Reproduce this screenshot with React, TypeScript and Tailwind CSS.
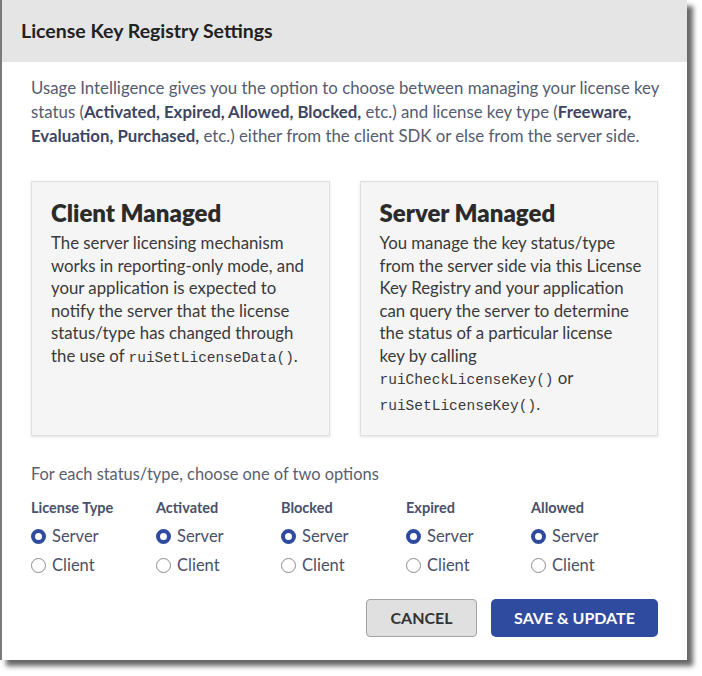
import { useState } from "react";

const COLUMNS = ["License Type", "Activated", "Blocked", "Expired", "Allowed"];

function Radio({ checked, label, onClick }: { checked: boolean; label: string; onClick: () => void }) {
  return (
    <button type="button" onClick={onClick} className="flex items-center gap-[6px] h-[29px] text-[16.5px] text-[#4a5068]">
      {checked ? (
        <span className="w-[15px] h-[15px] rounded-full border-[4px] border-[#2f4b9f] bg-white" />
      ) : (
        <span className="w-[15px] h-[15px] rounded-full border border-[#8a8a8a] bg-white" />
      )}
      {label}
    </button>
  );
}

const mono = { fontFamily: "'Liberation Mono', 'Courier New', monospace" };

export default function App() {
  const [choice, setChoice] = useState<Record<string, string>>({
    "License Type": "Server",
    Activated: "Server",
    Blocked: "Server",
    Expired: "Server",
    Allowed: "Server",
  });

  return (
    <div className="w-[702px] h-[676px] bg-white" style={{ fontFamily: "Lato, 'Noto Sans', sans-serif" }}>
      <div className="w-[687px] h-[660px] bg-white border-l-2 border-[#7a7a7a] shadow-[6px_6px_5px_rgba(0,0,0,0.6)] flex flex-col">
        {/* Header */}
        <div className="h-[62px] bg-[#e5e5e5] flex items-center px-[19px] shrink-0">
          <h2 className="text-[19.5px] font-bold text-[#222]">License Key Registry Settings</h2>
        </div>

        <div className="px-[29px] pt-[14px]">
          <p className="text-[16.8px] leading-[24px] text-[#555b70] w-[640px]">
            Usage Intelligence gives you the option to choose between managing your license key status (
            <b className="text-[#3e4562]">Activated, Expired, Allowed, Blocked,</b> etc.) and license key type (
            <b className="text-[#3e4562]">Freeware, Evaluation, Purchased,</b> etc.) either from the client SDK or else from
            the server side.
          </p>

          {/* Cards */}
          <div className="grid grid-cols-2 gap-[30px] mt-[33px] w-[627px]">
            <div className="h-[255px] bg-[#f5f5f5] border border-[#e0e0e0] shadow-[0_1px_3px_rgba(0,0,0,0.12)] pl-[19px] pr-[8px] pt-[16px]">
              <h3 className="text-[24px] leading-[30px] font-extrabold text-[#2b2b2b]">Client Managed</h3>
              <p className="text-[16.8px] leading-[22.5px] text-[#3a3a3a] mt-[4px]">
                The server licensing mechanism
                <br />
                works in reporting-only mode, and
                <br />
                your application is expected to
                <br />
                notify the server that the license
                <br />
                status/type has changed through
                <br />
                the use of{" "}
                <code className="text-[14.5px] leading-[20px]" style={mono}>
                  ruiSetLicenseData()
                </code>
                .
              </p>
            </div>
            <div className="h-[255px] bg-[#f5f5f5] border border-[#e0e0e0] shadow-[0_1px_3px_rgba(0,0,0,0.12)] pl-[19px] pr-[8px] pt-[16px]">
              <h3 className="text-[24px] leading-[30px] font-extrabold text-[#2b2b2b]">Server Managed</h3>
              <p className="text-[16.8px] leading-[22.5px] text-[#3a3a3a] mt-[4px]">
                You manage the key status/type
                <br />
                from the server side via this License
                <br />
                Key Registry and your application
                <br />
                can query the server to determine
                <br />
                the status of a particular license
                <br />
                key by calling
                <br />
                <code className="text-[14.5px] leading-[26px]" style={mono}>
                  ruiCheckLicenseKey()
                </code>{" "}
                or
                <br />
                <code className="text-[14.5px] leading-[26px]" style={mono}>
                  ruiSetLicenseKey()
                </code>
                .
              </p>
            </div>
          </div>

          <p className="mt-[26px] text-[16.4px] leading-[24px] text-[#5a6072]">For each status/type, choose one of two options</p>

          {/* Options */}
          <div className="grid grid-cols-5 w-[625px] mt-[12px]">
            {COLUMNS.map((col) => (
              <div key={col} className="flex flex-col items-start">
                <span className="text-[14.5px] leading-[20px] font-bold text-[#4a5068] mb-[4px]">{col}</span>
                {["Server", "Client"].map((opt) => (
                  <Radio
                    key={opt}
                    label={opt}
                    checked={choice[col] === opt}
                    onClick={() => setChoice({ ...choice, [col]: opt })}
                  />
                ))}
              </div>
            ))}
          </div>

          {/* Actions */}
          <div className="flex justify-end gap-[14px] mt-[19px] w-[627px]">
            <button className="w-[111px] h-[38px] rounded-[4px] bg-[#e0e0e0] border border-[#a3a3a3] text-[16px] font-bold text-[#333]">
              CANCEL
            </button>
            <button className="w-[167px] h-[38px] rounded-[5px] bg-[#2f4b9f] text-[16px] font-bold text-white">
              SAVE &amp; UPDATE
            </button>
          </div>
        </div>
      </div>
    </div>
  );
}
